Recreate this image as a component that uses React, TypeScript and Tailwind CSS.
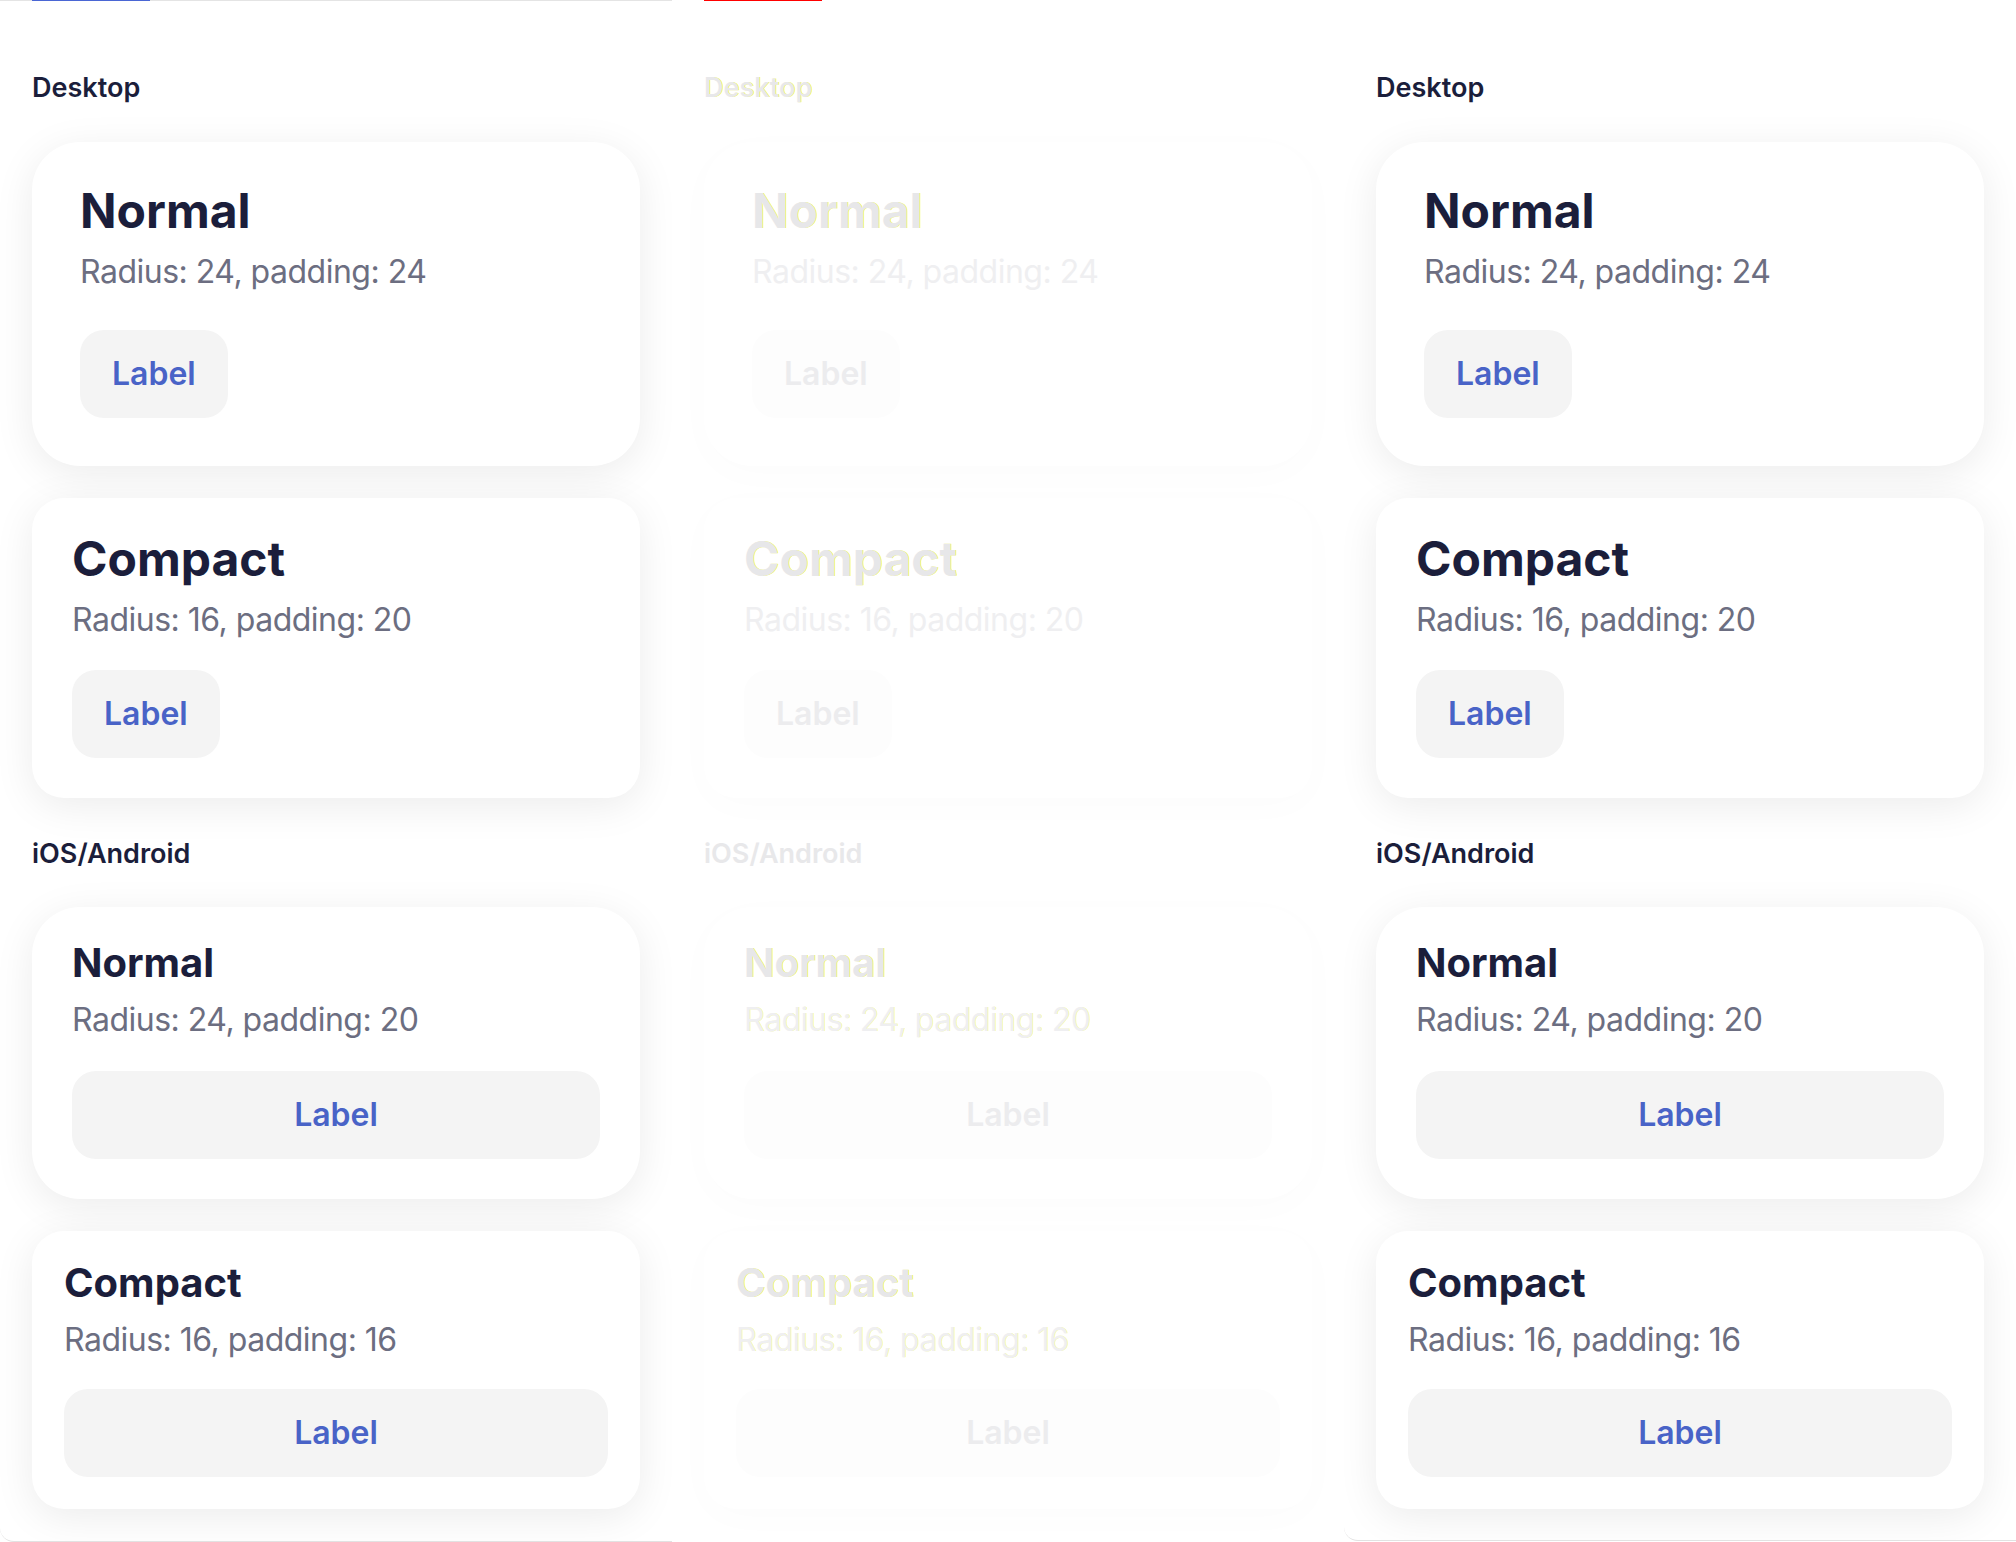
import React from "react";

type Tone = "base" | "diff";

type CardSpec = {
  title: string;
  sub: string;
  card: string;
  title_: string;
  sub_: string;
  btn: string;
  hlTitle?: boolean;
  hlSub?: boolean;
};

const desktop: CardSpec[] = [
  {
    title: "Normal",
    sub: "Radius: 24, padding: 24",
    card: "rounded-[48px] p-12",
    title_: "text-[48px] leading-[42px] font-bold",
    sub_: "mt-5",
    btn: "mt-[38px] self-start px-8",
    hlTitle: true,
  },
  {
    title: "Compact",
    sub: "Radius: 16, padding: 20",
    card: "rounded-[32px] p-10",
    title_: "text-[48px] leading-[42px] font-bold",
    sub_: "mt-5",
    btn: "mt-[30px] self-start px-8",
    hlTitle: true,
  },
];

const mobile: CardSpec[] = [
  {
    title: "Normal",
    sub: "Radius: 24, padding: 20",
    card: "rounded-[48px] p-10",
    title_: "text-[40px] leading-8 font-bold",
    sub_: "mt-[21px]",
    btn: "mt-[31px] w-full justify-center",
    hlTitle: true,
    hlSub: true,
  },
  {
    title: "Compact",
    sub: "Radius: 16, padding: 16",
    card: "rounded-[32px] p-8",
    title_: "mt-1 text-[40px] leading-8 font-bold",
    sub_: "mt-[21px]",
    btn: "mt-[29px] w-full justify-center",
    hlTitle: true,
    hlSub: true,
  },
];

// diff highlights: thin yellow edge on the changed glyphs
const edge = "[text-shadow:1px_0_0_rgba(255,255,0,0.55)]";
const edgeSoft = "[text-shadow:1px_0_0_rgba(255,255,0,0.3)]";

function Card({ spec, tone }: { spec: CardSpec; tone: Tone }) {
  const base = tone === "base";
  return (
    <div
      className={`flex flex-col bg-white ${spec.card} ${
        base ? "shadow-[0_8px_40px_rgba(0,0,0,0.08)]" : "shadow-[0_8px_40px_rgba(0,0,0,0.015)]"
      }`}
    >
      <h3
        className={`${spec.title_} ${
          base ? "text-[#1b1e3b]" : `text-[#e7e7e9] ${spec.hlTitle ? edge : ""}`
        }`}
      >
        {spec.title}
      </h3>
      <p
        className={`${spec.sub_} text-[32px] leading-10 tracking-[-0.5px] ${
          base ? "text-[#6c6e81]" : `text-[#efeff1] ${spec.hlSub ? edgeSoft : ""}`
        }`}
      >
        {spec.sub}
      </p>
      <div
        className={`${spec.btn} flex h-[88px] items-center rounded-3xl ${
          base ? "bg-[#f4f4f4]" : "bg-[#fdfdfd]"
        }`}
      >
        <span
          className={`text-[32px] font-semibold ${base ? "text-[#4963c7]" : "text-[#ececee]"}`}
        >
          Label
        </span>
      </div>
    </div>
  );
}

function Section({ tone }: { tone: Tone }) {
  const lbl = `text-[27px] leading-8 font-semibold ${
    tone === "base" ? "text-[#1b1e3b]" : "text-[#e8e8ea]"
  }`;
  return (
    <div className="flex flex-col px-8 pt-[71px]">
      <span className={`${lbl} ${tone === "diff" ? edge : ""}`}>Desktop</span>
      <div className="mt-[38px] flex flex-col gap-8">
        {desktop.map((s) => (
          <Card key={s.sub} spec={s} tone={tone} />
        ))}
      </div>
      <span className={`mt-10 ${lbl}`}>iOS/Android</span>
      <div className="mt-[37px] flex flex-col gap-8">
        {mobile.map((s) => (
          <Card key={s.sub} spec={s} tone={tone} />
        ))}
      </div>
    </div>
  );
}

export default function App() {
  return (
    <div
      className="flex h-[1542px] w-[2016px] overflow-hidden bg-white"
      style={{ fontFamily: "Inter, 'Noto Sans', sans-serif" }}
    >
      {/* before */}
      <div className="h-full w-[672px] shrink-0 overflow-hidden rounded-bl-[14px] border-b border-[#e2e2e2] bg-white">
        <div className="flex h-px bg-[#e4e4e4]">
          <div className="ml-8 w-[118px] bg-[#4a66d4]" />
        </div>
        <Section tone="base" />
      </div>

      {/* diff */}
      <div className="h-full w-[672px] shrink-0 overflow-hidden bg-white">
        <div className="flex h-px">
          <div className="ml-8 w-[118px] bg-[#ff0000]" />
        </div>
        <Section tone="diff" />
      </div>

      {/* after */}
      <div className="h-[1541px] w-[672px] shrink-0 overflow-hidden rounded-bl-[14px] border-b border-[#e2e2e2] bg-white">
        <div className="h-px" />
        <Section tone="base" />
      </div>
    </div>
  );
}
